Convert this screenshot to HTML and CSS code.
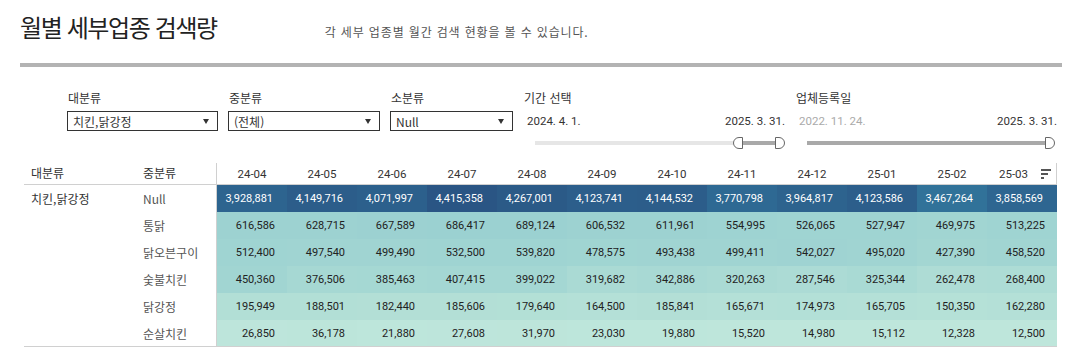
FILE: index.html
```html
<!DOCTYPE html>
<html lang="ko">
<head>
  <meta charset="UTF-8">
  <meta name="viewport" content="width=device-width, initial-scale=1.0">
  <title>월별 세부업종 검색량</title>
  <link rel="stylesheet" href="styles.css">
</head>
<body>
  <div class="page">
    <header class="top">
      <h1 class="title">월별 세부업종 검색량</h1>
      <p class="subtitle">각 세부 업종별 월간 검색 현황을 볼 수 있습니다.</p>
    </header>
    <div class="rule"></div>

    <div class="filters">
      <div class="filter filter-big">
        <span class="filter-label">대분류</span>
        <div class="select"><span>치킨,닭강정</span><i class="caret"></i></div>
      </div>
      <div class="filter filter-mid">
        <span class="filter-label">중분류</span>
        <div class="select"><span>(전체)</span><i class="caret"></i></div>
      </div>
      <div class="filter filter-small">
        <span class="filter-label">소분류</span>
        <div class="select"><span>Null</span><i class="caret"></i></div>
      </div>

      <div class="range range-period">
        <span class="filter-label">기간 선택</span>
        <div class="range-dates">
          <span>2024. 4. 1.</span>
          <span>2025. 3. 31.</span>
        </div>
        <div class="track">
          <div class="track-rest"></div>
          <div class="handle handle-left"></div>
          <div class="track-fill track-fill-short"></div>
          <div class="handle handle-right"></div>
        </div>
      </div>

      <div class="range range-reg">
        <span class="filter-label">업체등록일</span>
        <div class="range-dates">
          <span class="muted">2022. 11. 24.</span>
          <span>2025. 3. 31.</span>
        </div>
        <div class="track">
          <div class="track-fill"></div>
          <div class="handle handle-right"></div>
        </div>
      </div>
    </div>

    <table class="grid">
      <colgroup>
        <col class="col-big">
        <col class="col-mid">
        <col span="12" class="col-month">
      </colgroup>
      <thead>
        <tr id="headRow">
          <th class="label-cell">대분류</th>
          <th class="label-cell label-mid">중분류</th>
        </tr>
      </thead>
      <tbody id="body"></tbody>
    </table>
  </div>

  <script>
    const months = ['24-04', '24-05', '24-06', '24-07', '24-08', '24-09', '24-10', '24-11', '24-12', '25-01', '25-02', '25-03'];

    const rows = [
      ['Null', [3928881, 4149716, 4071997, 4415358, 4267001, 4123741, 4144532, 3770798, 3964817, 4123586, 3467264, 3858569]],
      ['통닭', [616586, 628715, 667589, 686417, 689124, 606532, 611961, 554995, 526065, 527947, 469975, 513225]],
      ['닭오븐구이', [512400, 497540, 499490, 532500, 539820, 478575, 493438, 499411, 542027, 495020, 427390, 458520]],
      ['숯불치킨', [450360, 376506, 385463, 407415, 399022, 319682, 342886, 320263, 287546, 325344, 262478, 268400]],
      ['닭강정', [195949, 188501, 182440, 185606, 179640, 164500, 185841, 165671, 174973, 165705, 150350, 162280]],
      ['순살치킨', [26850, 36178, 21880, 27608, 31970, 23030, 19880, 15520, 14980, 15112, 12328, 12500]]
    ];

    // value -> colour stops, read off the chart
    const stops = [
      [12000, [190, 230, 219]],
      [195000, [178, 223, 214]],
      [450000, [161, 213, 210]],
      [690000, [155, 209, 209]],
      [3400000, [49, 116, 155]],
      [4420000, [42, 85, 132]]
    ];

    function colorFor(value) {
      for (let i = 1; i < stops.length; i++) {
        const [v0, c0] = stops[i - 1];
        const [v1, c1] = stops[i];
        if (value <= v1 || i === stops.length - 1) {
          const t = Math.min(1, Math.max(0, (value - v0) / (v1 - v0)));
          const c = c0.map((ch, k) => Math.round(ch + (c1[k] - ch) * t));
          return `rgb(${c[0]}, ${c[1]}, ${c[2]})`;
        }
      }
    }

    const headRow = document.getElementById('headRow');
    months.forEach((m, i) => {
      const th = document.createElement('th');
      th.className = 'month';
      th.textContent = m;
      if (i === months.length - 1) {
        th.classList.add('month-last');
        th.innerHTML = m + '<svg class="sort" width="11" height="10" viewBox="0 0 11 10"><rect x="0" y="0" width="10" height="2" fill="#555"/><rect x="0" y="4" width="7" height="2" fill="#555"/><rect x="0" y="8" width="3" height="2" fill="#555"/></svg>';
      }
      headRow.append(th);
    });

    const body = document.getElementById('body');
    rows.forEach(([name, values], index) => {
      const tr = document.createElement('tr');
      if (index === 0) tr.className = 'row-top';

      const big = document.createElement('td');
      big.className = 'label-cell';
      big.textContent = index === 0 ? '치킨,닭강정' : '';
      tr.append(big);

      const mid = document.createElement('td');
      mid.className = 'label-cell label-mid sub';
      mid.textContent = name;
      tr.append(mid);

      values.forEach(v => {
        const td = document.createElement('td');
        td.className = 'num';
        td.style.background = colorFor(v);
        td.textContent = v.toLocaleString('en-US');
        tr.append(td);
      });
      body.append(tr);
    });
  </script>
</body>
</html>
```

FILE: styles.css
```css
body {
  margin: 0;
  font-family: "Noto Sans CJK KR", "Noto Sans", sans-serif;
  color: #333;
  background: #fff;
}

.page {
  padding: 11px 5px 0 20px;
}

.top {
  display: flex;
  align-items: baseline;
}

.title {
  margin: 0;
  font-size: 24px;
  font-weight: 400;
  line-height: 32px;
  color: #222;
  letter-spacing: -1.4px;
}

.subtitle {
  margin: 0 0 0 108px;
  font-size: 12px;
  color: #555;
  letter-spacing: 0.85px;
}

.rule {
  height: 4px;
  margin-top: 20px;
  background: #b3b3b3;
}

.filters {
  display: flex;
  gap: 10px;
  margin: 23px 0 0 47px;
}

.filter,
.range {
  display: flex;
  flex-direction: column;
}

.filter-label {
  font-size: 12px;
  line-height: 16px;
  color: #333;
  padding-left: 1px;
}

.filter-big { width: 151px; }
.filter-mid { width: 152px; }
.filter-small { width: 123px; }

.select {
  box-sizing: border-box;
  display: flex;
  align-items: center;
  justify-content: space-between;
  height: 20px;
  margin-top: 5px;
  padding: 0 8px 0 5px;
  border: 1px solid #333;
  font-size: 12px;
  color: #333;
}

.caret {
  width: 0;
  height: 0;
  border-left: 3.5px solid transparent;
  border-right: 3.5px solid transparent;
  border-top: 5px solid #333;
}

.range-period { width: 262px; }
.range-reg { width: 262px; }

.range-dates {
  display: flex;
  justify-content: space-between;
  height: 20px;
  margin-top: 5px;
  padding: 0 0 0 4px;
  font-family: Roboto, "Noto Sans", sans-serif;
  font-size: 11.5px;
  line-height: 20px;
  color: #333;
}

.range-dates .muted {
  color: #aaa;
}

.track {
  display: flex;
  align-items: center;
  height: 12px;
  margin: 6px 0 0 12px;
}

.range-reg .track {
  margin-left: 12px;
  margin-right: 2px;
}

.track-rest {
  flex: 1;
  height: 4px;
  background: #e6e6e6;
}

.track-fill {
  flex: 1;
  height: 4px;
  background: #a9a9a9;
}

.track-fill-short {
  flex: 0 0 32px;
}

.handle {
  box-sizing: border-box;
  width: 10px;
  height: 12px;
  background: #fff;
  border: 1px solid #666;
}

.handle-left {
  border-radius: 6px 0 0 6px;
}

.handle-right {
  border-radius: 0 6px 6px 0;
}

.grid {
  margin: 14px 0 0 4px;
  border-collapse: separate;
  border-spacing: 0;
  table-layout: fixed;
  width: 1033px;
  font-size: 12px;
}

.col-big { width: 119px; }
.col-mid { width: 74px; }
.col-month { width: 70px; }

.grid th,
.grid td {
  box-sizing: border-box;
  padding: 0;
  white-space: nowrap;
}

.grid thead th {
  height: 22px;
  border-bottom: 1px solid #d0d0d0;
  font-weight: 400;
  vertical-align: top;
  color: #333;
}

.grid thead .label-cell {
  padding-top: 1px;
  text-align: left;
}

.grid .label-cell {
  padding-left: 7px;
  text-align: left;
}

.grid .label-mid {
  padding-left: 0;
  border-right: 1px solid #d0d0d0;
}

.grid .month {
  padding-top: 4px;
  font-family: Roboto, "Noto Sans", sans-serif;
  font-size: 11.5px;
  text-align: center;
}

.grid .month-last {
  padding-right: 16px;
  border-right: 1px solid #d0d0d0;
  position: relative;
}

.sort {
  position: absolute;
  right: 4px;
  top: 6px;
}

.grid tbody td {
  height: 27px;
  vertical-align: middle;
  color: #333;
}

.grid tbody .sub {
  color: #555;
}

.grid .num {
  text-align: right;
  padding-right: 12px;
  font-family: Roboto, "Noto Sans", sans-serif;
  font-size: 11px;
  color: #222;
}

.grid .row-top .num {
  padding-right: 14px;
  color: #fff;
}

.grid tbody tr:last-child td {
  border-bottom: 1px solid #d0d0d0;
}
```
